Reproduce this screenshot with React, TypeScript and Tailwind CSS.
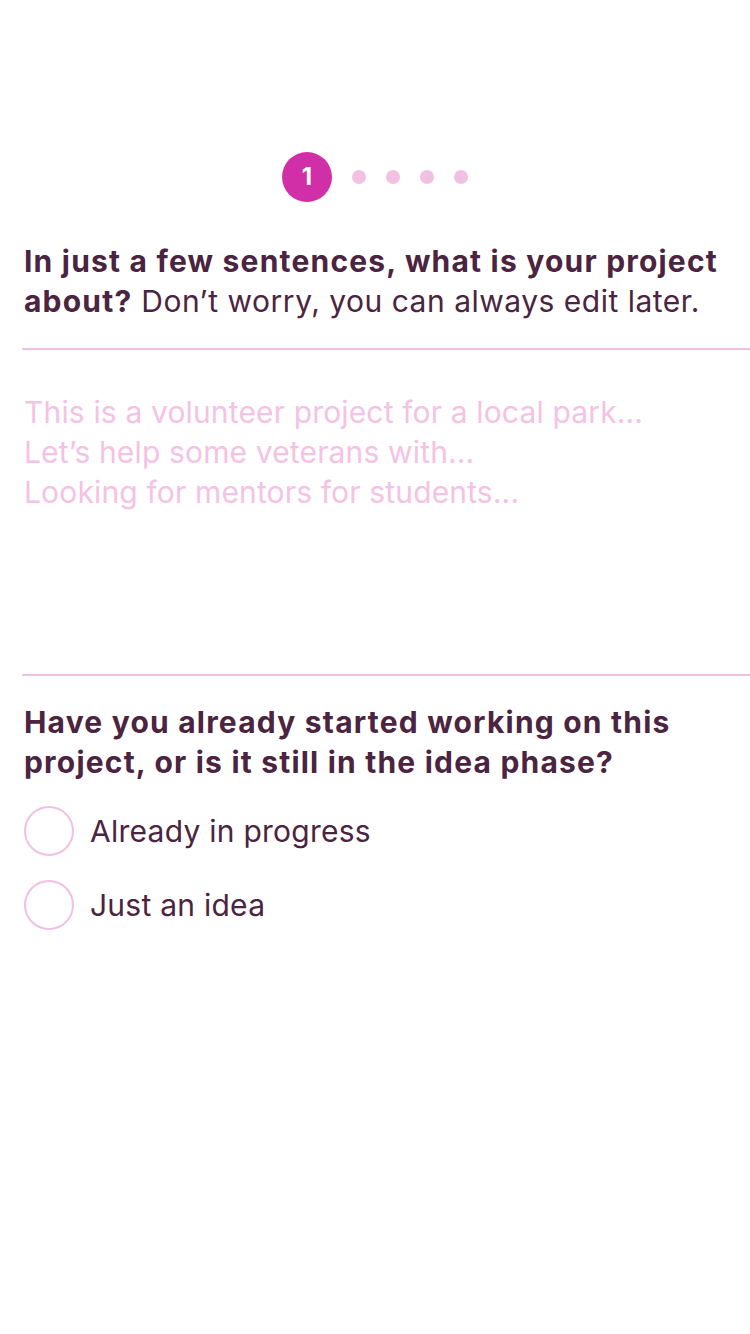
const steps = [1, 2, 3, 4, 5];

const ideas = [
  "This is a volunteer project for a local park...",
  "Let’s help some veterans with...",
  "Looking for mentors for students...",
];

const options = ["Already in progress", "Just an idea"];

export default function App() {
  return (
    <div
      className="min-h-[1334px] w-[750px] bg-white text-[#4b2441]"
      style={{ fontFamily: "Inter, 'Noto Sans', sans-serif" }}
    >
      <div className="flex items-center justify-center pt-[152px]">
        <div className="flex h-[50px] w-[50px] items-center justify-center rounded-full bg-[#d12fa7] text-[24px] font-bold text-white">
          1
        </div>
        <div className="ml-[20px] flex gap-[20px]">
          {steps.slice(1).map((s) => (
            <span key={s} className="h-[14px] w-[14px] rounded-full bg-[#f2c0e2]" />
          ))}
        </div>
      </div>

      <div className="pl-[24px] pr-[16px] pt-[39px] text-[30px] leading-[40px]">
        <p className="font-bold tracking-[1.2px]">In just a few sentences, what is your project</p>
        <p className="tracking-[0.5px]">
          <span className="font-bold tracking-[1.2px]">about?</span> Don’t worry, you can always edit later.
        </p>
      </div>

      <div className="ml-[22px] mt-[27px] h-[2px] bg-[#f2c0e2]" />

      <div className="h-[324px] pl-[24px] pt-[42px] text-[30px] leading-[40px] tracking-[0.15px] text-[#f4c2e4]">
        {ideas.map((t) => (
          <div key={t}>{t}</div>
        ))}
      </div>

      <div className="ml-[22px] h-[2px] bg-[#f2c0e2]" />

      <div className="pl-[24px] pr-[20px] pt-[26px]">
        <p className="max-w-[680px] text-[30px] font-bold leading-[40px] tracking-[1.2px]">
          Have you already started working on this project, or is it still in the idea phase?
        </p>
        <div className="mt-[24px] flex flex-col gap-[24px]">
          {options.map((o) => (
            <label key={o} className="flex items-center">
              <span className="h-[50px] w-[50px] shrink-0 rounded-full border-2 border-[#f2c0e2]" />
              <span className="ml-[16px] text-[30px] tracking-[0.25px]">{o}</span>
            </label>
          ))}
        </div>
      </div>
    </div>
  );
}
